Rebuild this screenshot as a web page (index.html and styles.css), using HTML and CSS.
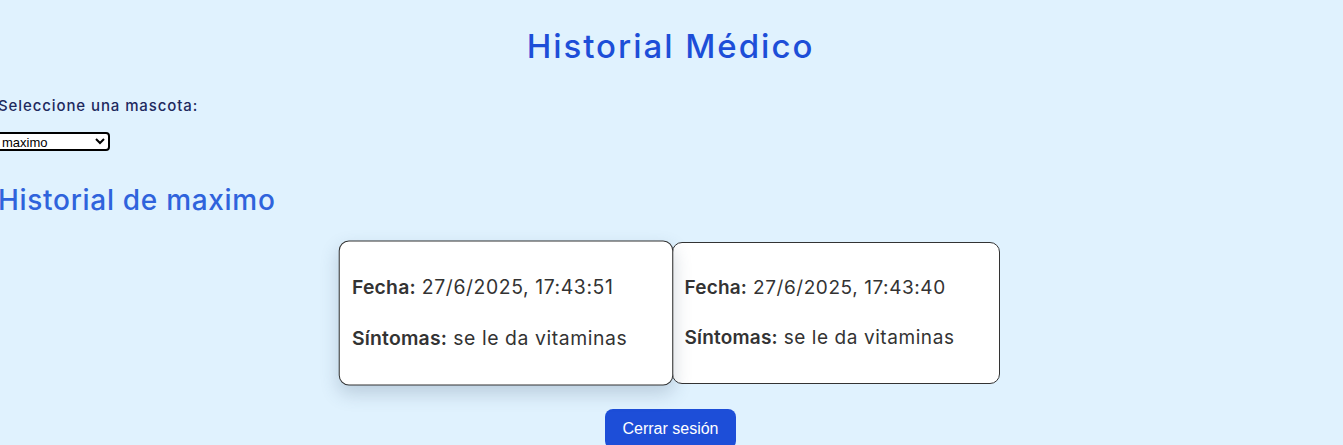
FILE: index.html
```html
<!DOCTYPE html>
<html lang="es">
<head>
<meta charset="utf-8">
<title>Historial Médico</title>
<link rel="stylesheet" href="styles.css">
</head>
<body>
<main class="page">
  <h1 class="title">Historial Médico</h1>
  <label class="pet-label" for="pet">Seleccione una mascota:</label>
  <select id="pet" class="pet-select">
    <option>maximo</option>
  </select>
  <h2 class="subtitle">Historial de maximo</h2>
  <section class="cards">
    <article class="card is-hover">
      <p class="card-line"><strong>Fecha:</strong> 27/6/2025, 17:43:51</p>
      <p class="card-line"><strong>Síntomas:</strong> se le da vitaminas</p>
    </article>
    <article class="card">
      <p class="card-line"><strong>Fecha:</strong> 27/6/2025, 17:43:40</p>
      <p class="card-line"><strong>Síntomas:</strong> se le da vitaminas</p>
    </article>
  </section>
  <div class="actions">
    <button class="logout" type="button">Cerrar sesión</button>
  </div>
</main>
</body>
</html>
```
FILE: styles.css
```css
html, body {
  margin: 0;
  padding: 0;
  background: #e0f2fe;
}
body {
  font-family: "Inter", "Open Sans", sans-serif;
}
.page {
  margin-left: -2px;
  display: flex;
  flex-direction: column;
  align-items: flex-start;
}
.title {
  align-self: stretch;
  text-align: center;
  margin: 27px 0 0;
  font-size: 33px;
  line-height: 38px;
  font-weight: 500;
  letter-spacing: 0.06em;
  color: #1d4ed8;
}
.pet-label {
  margin-top: 30px;
  font-size: 15px;
  line-height: 22px;
  font-weight: 500;
  letter-spacing: 0.06em;
  color: #1e2a5e;
}
.pet-select {
  margin: 15px 0 0 -2px;
  width: 114px;
  height: 19px;
  padding: 0;
  font-family: "Liberation Sans", Arial, sans-serif;
  font-size: 13px;
  border: 2px solid #000;
  border-radius: 4px;
  background: #fff;
  color: #000;
}
.subtitle {
  margin: 32px 0 0;
  font-size: 28px;
  line-height: 34px;
  font-weight: 500;
  letter-spacing: 0.025em;
  color: #2f63dc;
}
.cards {
  align-self: stretch;
  margin-top: 25px;
  display: flex;
  justify-content: center;
  gap: 2px;
}
.card {
  width: 328px;
  box-sizing: border-box;
  padding: 10px 12px;
  background: #fff;
  border: 1px solid #333;
  border-radius: 10px;
}
.card.is-hover {
  transform: scale(1.02);
  box-shadow: 0 8px 18px rgba(60, 80, 110, 0.22);
}
.card-line {
  margin: 20px 0;
  font-size: 19px;
  line-height: 30px;
  letter-spacing: 0.03em;
  color: #333;
}
.card-line strong {
  font-weight: 600;
  letter-spacing: 0.01em;
}
.actions {
  align-self: stretch;
  display: flex;
  justify-content: center;
  margin-top: 25px;
}
.logout {
  padding: 10px 17px;
  border: none;
  border-radius: 8px;
  background: #1d4ed8;
  color: #fff;
  font-family: "Liberation Sans", Arial, sans-serif;
  font-size: 16px;
  line-height: 20px;
}
```
